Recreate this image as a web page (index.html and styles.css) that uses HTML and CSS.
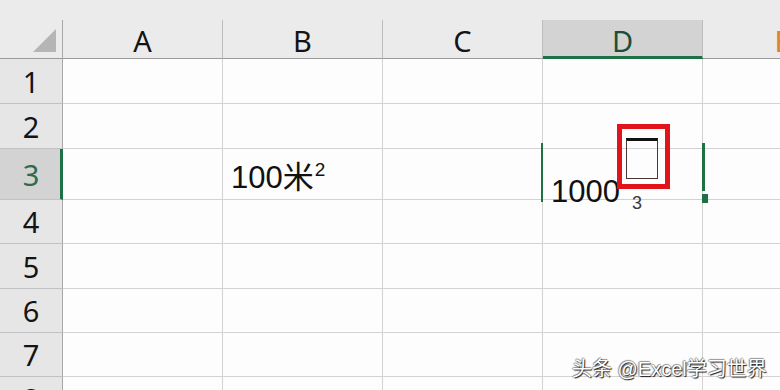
FILE: index.html
```html
<!DOCTYPE html>
<html lang="zh">
<head>
<meta charset="utf-8">
<link rel="stylesheet" href="styles.css">
</head>
<body>
<div class="sheet">
  <div class="hrow">
    <div class="corner"><svg class="tri" width="23" height="23" viewBox="0 0 23 23"><polygon points="23,0 23,23 0,23" fill="#b5b5b5"/></svg></div>
    <div class="ch">A</div>
    <div class="ch">B</div>
    <div class="ch">C</div>
    <div class="ch sel">D</div>
    <div class="ch last e">E</div>
  </div>
  <div class="row r45">
    <div class="rh">1</div><div class="c"></div><div class="c"></div><div class="c"></div><div class="c"></div><div class="c last"></div>
  </div>
  <div class="row r45">
    <div class="rh">2</div><div class="c"></div><div class="c"></div><div class="c"></div><div class="c"></div><div class="c last"></div>
  </div>
  <div class="row r51">
    <div class="rh rsel">3</div>
    <div class="c"></div>
    <div class="c val"><span>100米<sup class="sup">2</sup></span></div>
    <div class="c"></div>
    <div class="c active">
      <div class="gl"></div>
      <div class="gr"></div>
      <div class="handle"></div>
      <span class="edit-main">1000</span>
      <span class="edit-sub">3</span>
      <div class="tofu"></div>
      <div class="mark"></div>
    </div>
    <div class="c last"></div>
  </div>
  <div class="row r44">
    <div class="rh">4</div><div class="c"></div><div class="c"></div><div class="c"></div><div class="c"></div><div class="c last"></div>
  </div>
  <div class="row r45">
    <div class="rh">5</div><div class="c"></div><div class="c"></div><div class="c"></div><div class="c"></div><div class="c last"></div>
  </div>
  <div class="row r44">
    <div class="rh">6</div><div class="c"></div><div class="c"></div><div class="c"></div><div class="c"></div><div class="c last"></div>
  </div>
  <div class="row r44">
    <div class="rh">7</div><div class="c"></div><div class="c"></div><div class="c"></div><div class="c"></div><div class="c last"></div>
  </div>
  <div class="row r44">
    <div class="rh">8</div><div class="c"></div><div class="c"></div><div class="c"></div><div class="c"></div><div class="c last"></div>
  </div>
  <div class="wm">头条 @Excel学习世界</div>
</div>
</body>
</html>
```
FILE: styles.css
```css
* { box-sizing: border-box; }
html, body { margin: 0; padding: 0; }
body {
  width: 780px;
  height: 390px;
  overflow: hidden;
  background: #fdfdfd;
  font-family: "Liberation Sans", Arial, "Noto Sans CJK SC", sans-serif;
  color: #111;
}
.sheet { position: relative; width: 780px; height: 390px; overflow: hidden; }

.hrow {
  display: flex;
  height: 59px;
  padding-top: 20px;
  background: #ebebeb;
}
.corner {
  position: relative;
  width: 63px;
  flex: none;
  border-right: 1px solid #a8a8a8;
  border-bottom: 1px solid #9a9a9a;
}
.tri { position: absolute; left: 33px; top: 9px; }
.ch {
  width: 160px;
  flex: none;
  display: flex;
  align-items: center;
  justify-content: center;
  padding-top: 3px;
  border-right: 1px solid #bdbdbd;
  border-bottom: 1px solid #9a9a9a;
  font-family: "Noto Sans", "Open Sans", sans-serif;
  font-size: 29px;
  color: #141414;
}
.ch.sel {
  background: #d3d3d3;
  border-bottom: 3px solid #1e7145;
  padding-top: 5px;
  color: #1e4d3a;
}
.ch.e { color: #d9822b; }

.row { display: flex; }
.r45 { height: 45px; }
.r44 { height: 44px; }
.r51 { height: 51px; }
.rh {
  width: 63px;
  flex: none;
  background: #e6e6e6;
  border-right: 1px solid #a8a8a8;
  border-bottom: 1px solid #c2c2c2;
  display: flex;
  align-items: center;
  justify-content: center;
  font-family: "Noto Sans", "Open Sans", sans-serif;
  font-size: 29px;
  color: #141414;
}
.rh.rsel {
  background: #d3d3d3;
  border-right: 3px solid #1e7145;
  color: #2f6b4c;
  padding-left: 2px;
}
.c {
  width: 160px;
  flex: none;
  background: #fdfdfd;
  border-right: 1px solid #d2d2d2;
  border-bottom: 1px solid #d2d2d2;
}

.val {
  display: flex;
  align-items: flex-end;
  padding: 0 0 6px 8px;
  font-size: 31px;
  line-height: 31px;
}
.sup {
  font-size: 19px;
  line-height: 0;
  vertical-align: 12px;
  margin-left: 1px;
}

.active { position: relative; }
.gl {
  position: absolute;
  left: -2px; top: -6px;
  width: 2px; height: 59px;
  background: #1e7145;
}
.gr {
  position: absolute;
  left: 159px; top: -6px;
  width: 3px; height: 48px;
  background: #1e7145;
}
.handle {
  position: absolute;
  left: 159px; top: 45px;
  width: 6px; height: 9px;
  background: #1e7145;
}
.edit-main {
  position: absolute;
  left: 8px; top: 27px;
  font-size: 31px;
  line-height: 31px;
  color: #111;
  white-space: nowrap;
}
.edit-sub {
  position: absolute;
  left: 89px; top: 45px;
  font-size: 18px;
  line-height: 18px;
  color: #3a3a3a;
}
.tofu {
  position: absolute;
  left: 83px; top: -11px;
  width: 32px; height: 41px;
  border: 1px solid #4a3636;
  border-top: 3px solid #111;
}
.mark {
  position: absolute;
  left: 74px; top: -25px;
  width: 53px; height: 65px;
  border: 5px solid #e2141b;
}

.wm {
  position: absolute;
  left: 572px; top: 356px;
  font-family: "Liberation Sans", Arial, "Noto Sans CJK SC", sans-serif;
  font-size: 20px;
  line-height: 26px;
  color: #fff;
  white-space: nowrap;
  text-shadow: 1px 1px 1px rgba(0,0,0,0.9), -1px 0 1px rgba(0,0,0,0.4), 0 -1px 1px rgba(0,0,0,0.4);
}
```
